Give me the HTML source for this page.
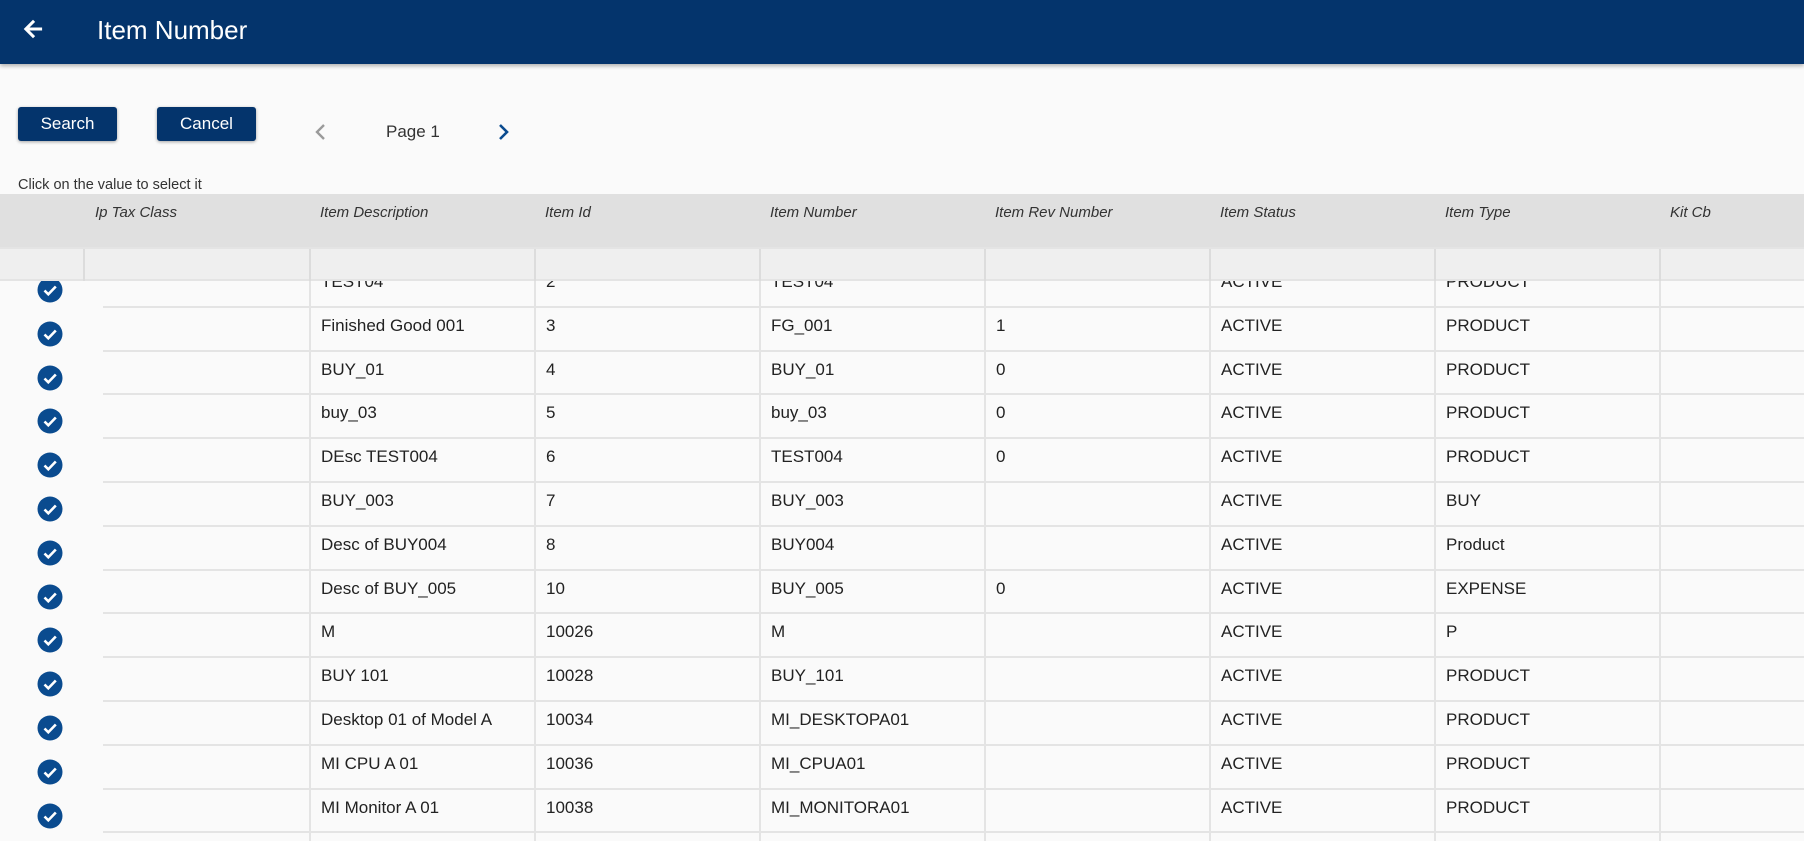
<!DOCTYPE html>
<html style="width:1804px;height:841px;overflow:hidden"><head><meta charset="utf-8"><style>
*{margin:0;padding:0;box-sizing:border-box}
body{width:1804px;height:841px;overflow:hidden;background:#fafafa;font-family:"Liberation Sans",sans-serif;position:relative;color:#222}
.top{position:absolute;left:0;top:0;width:1804px;height:64px;background:#04346c;box-shadow:0 2px 4px rgba(0,0,0,.3);z-index:5}
.title{position:absolute;left:97px;top:15px;color:#fff;font-size:26px;}
.btn{position:absolute;top:107px;height:34px;width:99px;background:#04346c;color:#fff;font-size:17px;text-align:center;line-height:34px;border-radius:3px;box-shadow:0 1px 3px rgba(0,0,0,.35)}
.abs{position:absolute}
.hdr{position:absolute;left:0;top:194px;width:1804px;height:53px;background:#e0e0e0;z-index:3}
.hdr span{position:absolute;top:10px;font-style:italic;font-size:15px;color:#333}
.flt{position:absolute;left:0;top:247px;width:1804px;height:34px;background:#efefef;border-top:2px solid #e4e4e4;border-bottom:2px solid #e4e4e4;z-index:3}
.flt i{position:absolute;top:0;width:2px;height:32px;background:#dcdcdc}
.row{position:absolute;left:0;width:1804px;height:43.8px}
.row .ln{position:absolute;left:103px;right:0;bottom:0;height:2px;background:#e4e4e4}
.row i{position:absolute;top:0;width:2px;height:44px;background:#e4e4e4}
.row span{position:absolute;top:8px;font-size:17px;line-height:20px;color:#222}
.chk{position:absolute;left:37px;top:13px;width:26px;height:26px}
</style></head><body>
<div class="top">
<svg class="abs" style="left:20px;top:16px" width="26" height="26" viewBox="0 0 24 24"><path d="M20 11H7.8l5.6-5.6L12 4l-8 8 8 8 1.4-1.4L7.8 13H20z" fill="#fff" stroke="#fff" stroke-width="0.8"/></svg>
<div class="title">Item Number</div>
</div>
<div class="btn" style="left:18px">Search</div>
<div class="btn" style="left:157px">Cancel</div>
<svg class="abs" style="left:312px;top:122px" width="18" height="20" viewBox="0 0 18 20"><path d="M12 3L5 10l7 7" stroke="#9a9a9a" stroke-width="2.4" fill="none"/></svg>
<div class="abs" style="left:386px;top:122px;font-size:17px;color:#333">Page 1</div>
<svg class="abs" style="left:495px;top:122px" width="18" height="20" viewBox="0 0 18 20"><path d="M5 3l7 7-7 7" stroke="#0a4b8f" stroke-width="2.6" fill="none"/></svg>
<div class="abs" style="left:18px;top:177px;font-size:14.5px;color:#333">Click on the value to select it</div>
<div class="hdr">
<span style="left:95px">Ip Tax Class</span><span style="left:320px">Item Description</span><span style="left:545px">Item Id</span><span style="left:770px">Item Number</span><span style="left:995px">Item Rev Number</span><span style="left:1220px">Item Status</span><span style="left:1445px">Item Type</span><span style="left:1670px">Kit Cb</span>
</div>
<div class="flt"><i style="left:83px"></i><i style="left:309px"></i><i style="left:534px"></i><i style="left:759px"></i><i style="left:984px"></i><i style="left:1209px"></i><i style="left:1434px"></i><i style="left:1659px"></i></div>
<div style="position:absolute;left:0;top:0;width:1804px;height:841px;overflow:hidden">
<div id="rows"></div>
</div>
<script>
var d=[["TEST04","2","TEST04","","ACTIVE","PRODUCT"],["Finished Good 001","3","FG_001","1","ACTIVE","PRODUCT"],["BUY_01","4","BUY_01","0","ACTIVE","PRODUCT"],["buy_03","5","buy_03","0","ACTIVE","PRODUCT"],["DEsc TEST004","6","TEST004","0","ACTIVE","PRODUCT"],["BUY_003","7","BUY_003","","ACTIVE","BUY"],["Desc of BUY004","8","BUY004","","ACTIVE","Product"],["Desc of BUY_005","10","BUY_005","0","ACTIVE","EXPENSE"],["M","10026","M","","ACTIVE","P"],["BUY 101","10028","BUY_101","","ACTIVE","PRODUCT"],["Desktop 01 of Model A","10034","MI_DESKTOPA01","","ACTIVE","PRODUCT"],["MI CPU A 01","10036","MI_CPUA01","","ACTIVE","PRODUCT"],["MI Monitor A 01","10038","MI_MONITORA01","","ACTIVE","PRODUCT"],["","","","","",""]];
var h="";
for(var r=0;r<d.length;r++){
var t=264+r*43.8;
h+='<div class="row" style="top:'+t+'px"><div class="ln"></div>';
[309,534,759,984,1209,1434,1659].forEach(function(x){h+='<i style="left:'+x+'px"></i>'});
var xs=[321,546,771,996,1221,1446];
for(var c=0;c<6;c++)h+='<span style="left:'+xs[c]+'px">'+d[r][c]+'</span>';
if(r<13)h+='<svg class="chk" viewBox="0 0 26 26"><circle cx="13" cy="13" r="12.5" fill="#0a4b8f"/><path d="M7.5 13.5l3.8 3.8 7.5-7.8" stroke="#fff" stroke-width="2.6" fill="none"/></svg>';
h+='</div>';}
document.getElementById("rows").innerHTML=h;
</script>
</body></html>
